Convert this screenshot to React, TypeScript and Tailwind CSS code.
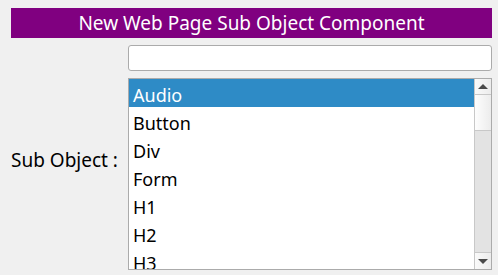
import React from "react";

const items = ["Audio", "Button", "Div", "Form", "H1", "H2", "H3"];

export default function App() {
  return (
    <div
      className="w-[498px] h-[275px] bg-[#f0f0f0] pl-[11px] pr-[6px] pt-[8px] overflow-hidden"
      style={{ fontFamily: '"Noto Sans", "Open Sans", sans-serif' }}
    >
      <div className="h-[30px] bg-[#800080] text-white text-[19px] leading-[30px] text-center">
        New Web Page Sub Object Component
      </div>
      <div className="grid grid-cols-[117px_1fr] mt-[7px] gap-y-[7px]">
        <div />
        <div className="h-[26px] bg-white border border-[#ababab] rounded-[3px]" />
        <div className="flex items-center text-[19px] text-black pb-[28px]">Sub Object :</div>
        <div className="h-[192px] border border-[#ababab] bg-white flex overflow-hidden">
          <div className="flex-1 flex flex-col">
            {items.map((it, i) => (
              <div
                key={it}
                className={
                  "h-[28px] shrink-0 pl-[4px] pt-[2px] text-[18px] leading-[28px] " +
                  (i === 0 ? "bg-[#2e8bc6] text-white" : "text-black")
                }
              >
                {it}
              </div>
            ))}
          </div>
          <div className="w-[17px] flex flex-col border-l border-[#c8c8c8] bg-[#e3e3e3]">
            <div className="h-[16px] shrink-0 border-b border-[#c8c8c8] bg-gradient-to-r from-[#fafafa] to-[#ececec] flex items-center justify-center">
              <div className="w-0 h-0 border-l-[5px] border-r-[5px] border-b-[5px] border-l-transparent border-r-transparent border-b-[#4a4a4a]" />
            </div>
            <div className="h-[36px] shrink-0 border-b border-[#c8c8c8] bg-gradient-to-r from-[#fdfdfd] to-[#ececec]" />
            <div className="flex-1" />
            <div className="h-[17px] shrink-0 border-t border-[#c8c8c8] bg-gradient-to-r from-[#fafafa] to-[#ececec] flex items-center justify-center">
              <div className="w-0 h-0 border-l-[5px] border-r-[5px] border-t-[5px] border-l-transparent border-r-transparent border-t-[#4a4a4a]" />
            </div>
          </div>
        </div>
      </div>
    </div>
  );
}
